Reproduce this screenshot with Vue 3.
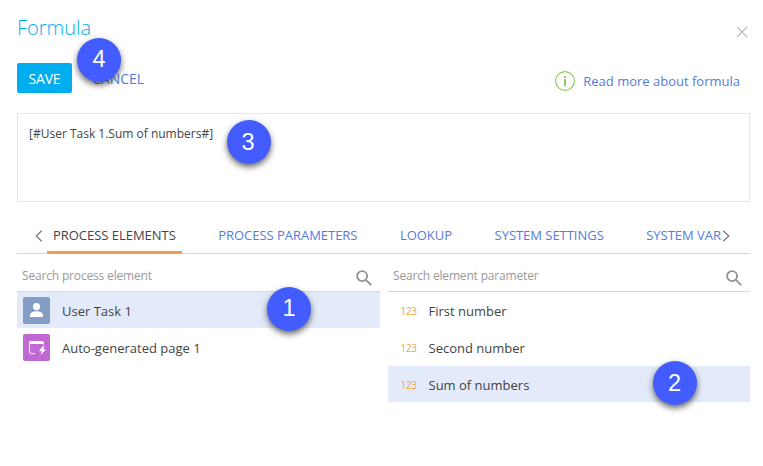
<script setup>
const tabs = [
  { label: 'PROCESS ELEMENTS', key: 'elements', active: true },
  { label: 'PROCESS PARAMETERS', key: 'parameters' },
  { label: 'LOOKUP', key: 'lookup' },
  { label: 'SYSTEM SETTINGS', key: 'settings' },
  { label: 'SYSTEM VAR', key: 'variables' },
]
const elements = [
  { label: 'User Task 1', icon: 'user', key: 'user', active: true },
  { label: 'Auto-generated page 1', icon: 'page', key: 'page' },
]
const parameters = [
  { label: 'First number', key: 'first' },
  { label: 'Second number', key: 'second' },
  { label: 'Sum of numbers', key: 'sum', active: true },
]
</script>

<template>
  <div class="dialog">
    <header class="head">
      <h1 class="title"><span>Formula</span></h1>
      <svg class="close" viewBox="0 0 12 12"><path d="M1 1L11 11M11 1L1 11" /></svg>
    </header>

    <div class="actions">
      <button class="save"><span>SAVE</span></button>
      <button class="cancel"><span>CANCEL</span></button>
      <a class="help">
        <svg class="info" viewBox="0 0 20 20">
          <circle cx="10" cy="10" r="9.4" />
          <path d="M9 5h2v2H9zM9 8h2v7H9z" />
        </svg>
        <span class="help-text">Read more about formula</span>
      </a>
    </div>

    <div class="editor"><span>[#User Task 1.Sum of numbers#]</span></div>

    <nav class="tabs">
      <svg class="arrow" viewBox="0 0 8 12"><path d="M6.7.7L1.2 6l5.5 5.3" /></svg>
      <div class="strip">
        <div v-for="t in tabs" :key="t.key" class="tab" :class="[t.key, { active: t.active }]"><span>{{ t.label }}</span></div>
      </div>
      <svg class="arrow" viewBox="0 0 8 12"><path d="M1.3.7L6.8 6l-5.5 5.3" /></svg>
    </nav>

    <div class="columns">
      <section class="column">
        <div class="search">
          <span>Search process element</span>
          <svg class="lens" viewBox="0 0 16 16"><circle cx="6.1" cy="6.1" r="5" /><path d="M9.8 9.8L15.2 15.2" /></svg>
        </div>
        <div v-for="e in elements" :key="e.key" class="row" :class="{ active: e.active }">
          <svg v-if="e.icon === 'user'" class="tile" viewBox="0 0 27 27">
            <rect width="27" height="27" rx="2" fill="#849dc4" />
            <circle cx="13.5" cy="9.6" r="3.6" fill="#fff" />
            <path d="M7 20v-1.7c0-2.5 3.2-4.1 6.5-4.1s6.5 1.6 6.5 4.1V20z" fill="#fff" />
          </svg>
          <svg v-else class="tile" viewBox="0 0 27 27">
            <rect width="27" height="27" rx="2" fill="#c169d2" />
            <path d="M6 10V9q0-2 2-2h11q2 0 2 2v1z" fill="#fff" />
            <path d="M6.5 9v8.5q0 2.2 2.2 2.2h3.3" fill="none" stroke="#fff" />
            <path d="M20.5 9v2.2" fill="none" stroke="#fff" stroke-opacity=".7" />
            <path d="M19.3 12.5l-3.3 4.8h2.8l-1.1 3.7 5.3-5.4h-2.7l1.2-3.1z" fill="#fff" />
          </svg>
          <span class="name" :class="e.key">{{ e.label }}</span>
        </div>
      </section>

      <section class="column">
        <div class="search">
          <span>Search element parameter</span>
          <svg class="lens" viewBox="0 0 16 16"><circle cx="6.1" cy="6.1" r="5" /><path d="M9.8 9.8L15.2 15.2" /></svg>
        </div>
        <div v-for="p in parameters" :key="p.key" class="row param" :class="{ active: p.active }">
          <span class="type">123</span>
          <span class="name" :class="p.key">{{ p.label }}</span>
        </div>
      </section>
    </div>

    <span v-for="n in 4" :key="n" class="badge" :class="'step-' + n">{{ n }}</span>
  </div>
</template>

<style>
body { background: #fff; overflow: hidden; }
</style>

<style scoped>
.dialog {
  position: relative;
  box-sizing: border-box;
  width: 763px;
  height: 466px;
  padding: 14px 13px 0 17px;
  background: #fff;
  color: #444;
  font-family: "Open Sans", "Noto Sans", sans-serif;
  font-size: 13px;
}
.head { display: flex; justify-content: space-between; height: 49px; }
.title { margin: 0; font-size: 20px; font-weight: 300; line-height: 28px; color: #00aeef; }
.close { width: 12px; height: 12px; margin: 12px 2px 0 0; fill: none; stroke: #bbb; stroke-width: 1.2; }
.actions { display: flex; height: 30px; }
button { border: 0; padding: 0; font: inherit; line-height: 32px; background: none; text-align: center; }
.save { width: 55px; height: 30px; border-radius: 2px; background: #00aeef; color: #fff; font-size: 14px; letter-spacing: -0.2px; }
.cancel { margin-left: 20px; color: #567bdc; font-size: 14px; }
.help { display: flex; margin: 8px 10px 0 auto; color: #567bdc; font-size: 13px; line-height: 20px; }
.info { width: 20px; height: 20px; margin-right: 8px; }
.info circle { fill: none; stroke: #8ecb60; stroke-width: 1.2; }
.info path { fill: #8ecb60; }
.editor {
  box-sizing: border-box;
  height: 89px;
  margin-top: 20px;
  padding: 10px 11px;
  border: 1px solid #e6e6e6;
  font-size: 12px;
  line-height: 20px;
}
.tabs {
  display: flex;
  align-items: flex-start;
  box-sizing: border-box;
  height: 35px;
  margin-top: 17px;
  padding: 0 20px 0 18px;
  border-bottom: 1px solid #d9d9d9;
}
.arrow { flex: none; width: 8px; height: 12px; margin-top: 10.5px; fill: none; stroke: #777; stroke-width: 1.2; }
.strip { display: flex; flex: 1; margin-left: 4px; height: 35px; }
.tab {
  box-sizing: border-box;
  height: 35px;
  padding: 0 6px;
  margin-right: 30.5px;
  line-height: 32px;
  letter-spacing: -0.03px;
  white-space: nowrap;
  color: #567bdc;
}
.tab.active { color: #444; border-bottom: 3px solid #f69a52; }
.tab.variables { margin-right: 0; padding-right: 0; }
.columns { display: grid; grid-template-columns: 363px 362px; gap: 8px; }
.search {
  display: flex;
  justify-content: space-between;
  box-sizing: border-box;
  height: 38px;
  padding: 0 8px 0 5px;
  border-bottom: 1px solid #d9d9d9;
  font-size: 12px;
  line-height: 44px;
  letter-spacing: -0.17px;
  color: #999;
}
.lens { width: 16px; height: 16px; margin-top: 16px; fill: none; stroke: #929292; stroke-width: 1.9; }
.row { display: flex; align-items: center; height: 36px; margin-bottom: 1px; padding-left: 6px; }
.row.active { background: #e3eafa; }
.tile { width: 27px; height: 27px; margin-right: 12px; }
.param { padding-left: 12.5px; }
.type { width: 28px; margin-top: 1px; font-size: 10px; letter-spacing: -0.3px; color: #f0a83c; }
.name { line-height: 20px; margin-top: 2px; }
.badge {
  position: absolute;
  width: 44px;
  height: 44px;
  border-radius: 50%;
  background: #425cff;
  box-shadow: 0 3px 6px rgba(0, 0, 0, 0.6);
  color: #fff;
  font: 23.5px/43px "Liberation Sans", Arial, sans-serif;
  text-align: center;
}
.step-1 { left: 267px; top: 287px; }
.step-2 { left: 653px; top: 361px; line-height: 45px; text-indent: -1px; }
.step-3 { left: 227px; top: 120px; line-height: 45px; text-indent: -2px; }
.step-4 { left: 77px; top: 38px; }
</style>
